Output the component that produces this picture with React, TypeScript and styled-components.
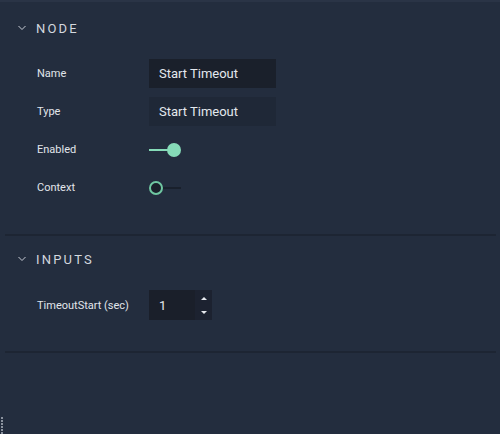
import React from "react";
import styled, { createGlobalStyle } from "styled-components";

const Global = createGlobalStyle`
  html, body { margin: 0; padding: 0; background: #232d3e; }
  body { font-family: Roboto, "Noto Sans", sans-serif; }
  * { box-sizing: border-box; }
`;

const Panel = styled.div`
  position: relative;
  width: 500px;
  height: 434px;
  background: #232d3e;
  border-top: 2px solid #2a3446;
  display: flex;
  flex-direction: column;
  overflow: hidden;
`;

const Section = styled.section<{ $top: number }>`
  display: flex;
  flex-direction: column;
  margin: 0 4px 0 5px;
  padding-top: ${(p) => p.$top}px;
  padding-bottom: 32px;
  border-bottom: 2px solid #1d2533;
`;

const Header = styled.div`
  display: flex;
  align-items: center;
  height: 28px;
  padding-left: 13px;
  gap: 10px;
  color: #d3d8df;
  font-size: 13px;
  letter-spacing: 2.2px;
  font-weight: 400;
`;

const Rows = styled.div`
  display: flex;
  flex-direction: column;
  gap: 9px;
  margin-top: 17px;
`;

const Row = styled.div`
  display: grid;
  grid-template-columns: 112px auto;
  align-items: center;
  height: 29px;
  padding-left: 32px;
`;

const Label = styled.span`
  font-size: 11px;
  color: #e1e5eb;
`;

const TextField = styled.div<{ $readonly?: boolean }>`
  width: 127px;
  height: 29px;
  display: flex;
  align-items: center;
  padding-left: 10px;
  font-size: 13px;
  color: #e4e8ee;
  background: ${(p) => (p.$readonly ? "#1f2837" : "#1a202b")};
`;

const Toggle = styled.div`
  position: relative;
  width: 33px;
  height: 16px;
`;

const Track = styled.div<{ $on: boolean }>`
  position: absolute;
  top: 7px;
  height: 2px;
  left: ${(p) => (p.$on ? 0 : 12)}px;
  width: 20px;
  background: ${(p) => (p.$on ? "#86dbb8" : "#19202c")};
`;

const Knob = styled.div<{ $on: boolean }>`
  position: absolute;
  top: 1px;
  left: ${(p) => (p.$on ? 18 : 0)}px;
  width: 14px;
  height: 14px;
  border-radius: 50%;
  background: ${(p) => (p.$on ? "#86dbb8" : "#1a202b")};
  border: ${(p) => (p.$on ? "none" : "2px solid #6fc7a2")};
`;

const NumberBox = styled.div`
  display: flex;
  width: 63px;
  height: 30px;
`;

const NumberField = styled.div`
  flex: 1;
  display: flex;
  align-items: center;
  padding-left: 10px;
  font-size: 13px;
  color: #e4e8ee;
  background: #1a1f2a;
`;

const Spinner = styled.div`
  width: 17px;
  background: #1c2230;
  display: flex;
  flex-direction: column;
  align-items: center;
  justify-content: space-between;
  padding: 7px 0 6px;
`;

const Arrow = styled.span<{ $up?: boolean }>`
  width: 0;
  height: 0;
  border-left: 3.5px solid transparent;
  border-right: 3.5px solid transparent;
  ${(p) => (p.$up ? "border-bottom: 3px solid #e6e9ee;" : "border-top: 3px solid #e6e9ee;")}
`;

const Grip = styled.div`
  position: absolute;
  left: 1px;
  bottom: 0;
  display: flex;
  flex-direction: column;
  gap: 1px;
`;

const GripDot = styled.span`
  width: 2px;
  height: 2px;
  background: #8a929e;
`;

const Chevron = () => (
  <svg width="8" height="6" viewBox="0 0 8 6">
    <path d="M0.5 1 L4 4.5 L7.5 1" fill="none" stroke="#c8cdd5" strokeWidth="1" />
  </svg>
);

export default function App() {
  return (
    <>
      <Global />
      <Panel>
        <Section $top={12}>
          <Header>
            <Chevron />
            NODE
          </Header>
          <Rows>
            <Row>
              <Label>Name</Label>
              <TextField>Start Timeout</TextField>
            </Row>
            <Row>
              <Label>Type</Label>
              <TextField $readonly>Start Timeout</TextField>
            </Row>
            <Row>
              <Label>Enabled</Label>
              <Toggle>
                <Track $on />
                <Knob $on />
              </Toggle>
            </Row>
            <Row>
              <Label>Context</Label>
              <Toggle>
                <Track $on={false} />
                <Knob $on={false} />
              </Toggle>
            </Row>
          </Rows>
        </Section>
        <Section $top={9}>
          <Header>
            <Chevron />
            INPUTS
          </Header>
          <Rows>
            <Row>
              <Label>TimeoutStart (sec)</Label>
              <NumberBox>
                <NumberField>1</NumberField>
                <Spinner>
                  <Arrow $up />
                  <Arrow />
                </Spinner>
              </NumberBox>
            </Row>
          </Rows>
        </Section>
        <Grip>
          {Array.from({ length: 6 }).map((_, i) => (
            <GripDot key={i} />
          ))}
        </Grip>
      </Panel>
    </>
  );
}
